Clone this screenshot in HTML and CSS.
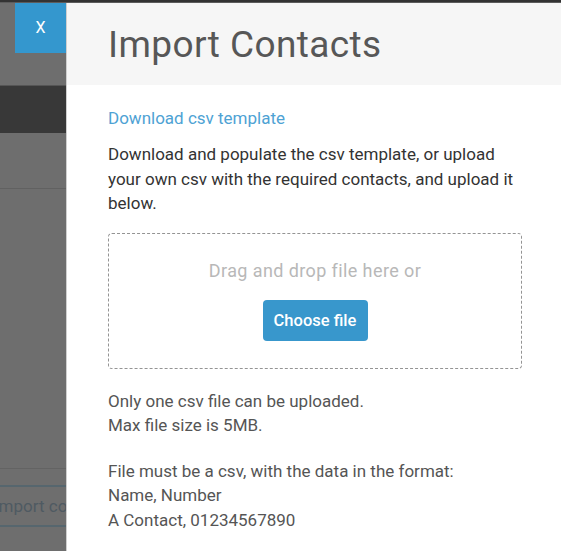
FILE: index.html
```html
<!DOCTYPE html>
<html lang="en">
<head>
    <meta charset="UTF-8">
    <title>Import Contacts</title>
    <link rel="stylesheet" href="styles.css">
</head>
<body>
<div class="topbar"></div>
<div class="wrap">
    <div class="backdrop">
        <div class="close">X</div>
        <div class="bg-gap1"></div>
        <div class="bg-band"></div>
        <div class="bg-row1"></div>
        <div class="bg-row2"></div>
        <div class="bg-btn">Import contacts</div>
    </div>
    <div class="panel">
        <div class="panel-head">
            <h1>Import Contacts</h1>
        </div>
        <div class="panel-body">
            <a class="tpl" href="#">Download csv template</a>
            <p class="intro">Download and populate the csv template, or upload your own csv with the required contacts, and upload it below.</p>
            <div class="drop">
                <div class="drop-text">Drag and drop file here or</div>
                <button class="choose">Choose file</button>
            </div>
            <p class="note first">Only one csv file can be uploaded.<br>Max file size is 5MB.</p>
            <p class="note">File must be a csv, with the data in the format:<br>Name, Number<br>A Contact, 01234567890</p>
        </div>
    </div>
</div>
</body>
</html>
```
FILE: styles.css
```css
* {
    margin: 0;
    padding: 0;
    box-sizing: border-box;
}

body {
    background: #6e6e6e;
    font-family: Roboto, "Liberation Sans", sans-serif;
    height: 551px;
    overflow: hidden;
}

.topbar {
    height: 3px;
    background: #333;
    border-bottom: 1px solid #5c5c5c;
}

.wrap {
    display: flex;
    height: 548px;
}

/* faded page behind the overlay */
.backdrop {
    width: 66px;
    flex: none;
    display: flex;
    flex-direction: column;
}

.close {
    width: 51px;
    height: 50px;
    margin-left: 15px;
    background: #3497ce;
    color: #fff;
    font-size: 16px;
    line-height: 50px;
    text-align: center;
}

.bg-gap1 {
    height: 32px;
}

.bg-band {
    height: 48px;
    background: #383838;
    border-top: 1px solid #555;
}

.bg-row1 {
    height: 56px;
    border-bottom: 1px solid #616161;
}

.bg-row2 {
    height: 280px;
    border-bottom: 1px solid #636363;
}

.bg-btn {
    height: 42px;
    margin-top: 16px;
    border-top: 2px solid #56666e;
    border-bottom: 2px solid #56666e;
    color: #4f5a62;
    font-size: 17px;
    line-height: 38px;
    white-space: nowrap;
    overflow: hidden;
    text-indent: -6px;
}

.panel {
    flex: 1;
    background: #fff;
    border-left: 1px solid #cfcfcf;
}

.panel-head {
    height: 82px;
    background: #f6f6f6;
    padding: 22px 0 0 41px;
}

.panel-head h1 {
    font-weight: 400;
    font-size: 37px;
    letter-spacing: 0.4px;
    color: #575757;
    line-height: 40px;
}

.panel-body {
    padding: 21px 39px 0 41px;
}

.tpl {
    display: block;
    color: #4ea2d4;
    text-decoration: none;
    font-size: 17px;
    line-height: 24px;
}

.intro {
    margin-top: 12px;
    font-size: 17px;
    line-height: 24.5px;
    color: #333;
}

.drop {
    margin-top: 17px;
    height: 136px;
    border: 1px dashed #949494;
    border-radius: 4px;
    display: flex;
    flex-direction: column;
    align-items: center;
    padding-top: 25px;
}

.drop-text {
    color: #b8b8b8;
    font-size: 18px;
    letter-spacing: 0.4px;
    line-height: 24px;
}

.choose {
    margin-top: 17px;
    width: 105px;
    height: 41px;
    background: #3897cc;
    color: #fff;
    border: 0;
    border-radius: 4px;
    font-family: Roboto, "Liberation Sans", sans-serif;
    font-size: 16.5px;
    font-weight: 500;
}

.note {
    margin-top: 21px;
    font-size: 17px;
    line-height: 24.5px;
    color: #555;
}

.note.first {
    margin-top: 20px;
}
```
